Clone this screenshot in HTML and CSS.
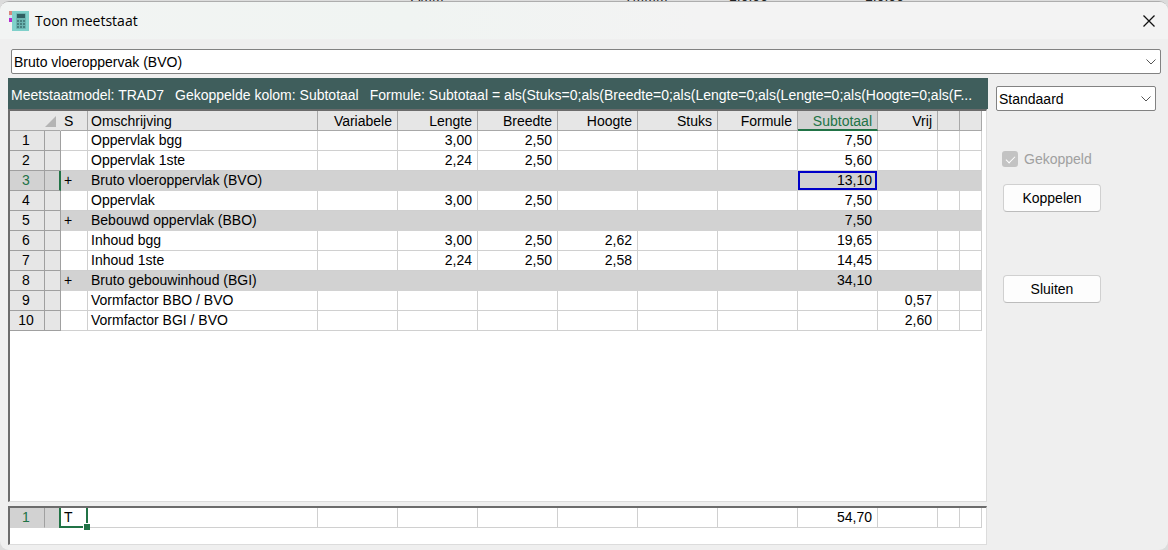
FILE: index.html
```html
<!DOCTYPE html>
<html lang="nl">
<head>
<meta charset="utf-8">
<title>Toon meetstaat</title>
<link rel="stylesheet" href="styles.css">
</head>
<body>
<div class="behind" aria-hidden="true">
  <span class="behind-text behind-a">AMM</span>
  <span class="behind-text behind-b">TMMM</span>
  <span class="behind-text behind-c">1,0,00</span>
  <span class="behind-text behind-d">1,0,00</span>
</div>
<main class="dialog">
  <header class="titlebar">
    <svg class="app-icon" viewBox="0 0 20 20" aria-hidden="true">
      <rect x="0" y="0" width="4" height="4" fill="#d9877c"/>
      <rect x="0" y="4" width="4" height="3" fill="#cfe6f2"/>
      <rect x="0" y="7" width="4" height="4" fill="#b52bd0"/>
      <rect x="3" y="0" width="17" height="20" fill="#7fd0ca"/>
      <rect x="7" y="2" width="10" height="16" rx="1" fill="#6bb5b1"/>
      <rect x="8" y="3" width="8" height="4" fill="#2f5f62"/>
      <g fill="#47807f"><rect x="8" y="9" width="2" height="2"/><rect x="11" y="9" width="2" height="2"/><rect x="14" y="9" width="2" height="2"/><rect x="8" y="12" width="2" height="2"/><rect x="11" y="12" width="2" height="2"/><rect x="14" y="12" width="2" height="2"/><rect x="8" y="15" width="2" height="2"/><rect x="11" y="15" width="2" height="2"/><rect x="14" y="15" width="2" height="2"/></g>
    </svg>
    <h1 class="title">Toon meetstaat</h1>
    <button class="close" type="button" aria-label="Sluiten">
      <svg viewBox="0 0 12 12" width="12" height="12"><path d="M.5.5l11 11M11.5.5l-11 11" stroke="#111" stroke-width="1.3" fill="none"/></svg>
    </button>
  </header>
  <div class="content">
    <div class="combo">
      <select class="select" aria-label="Meetstaat"><option>Bruto vloeroppervak (BVO)</option></select>
      <svg class="chevron" viewBox="0 0 10 6" aria-hidden="true"><path d="M.5.5L5 5L9.500.5" stroke="#555" fill="none"/></svg>
    </div>
    <div class="columns">
      <section class="sheet">
        <p class="model"><span class="part">Meetstaatmodel: TRAD7</span><span class="part">Gekoppelde kolom: Subtotaal</span><span>Formule: Subtotaal = als(Stuks=0;als(Breedte=0;als(Lengte=0;als(Lengte=0;als(Hoogte=0;als(F...</span></p>
        <div class="pane pane-main">
          <table class="grid">
            <colgroup><col class="c-row"><col class="c-mark"><col class="c-s"><col class="c-name"><col class="c-num" span="7"><col class="c-vrij"><col class="c-end" span="2"></colgroup>
            <thead>
              <tr><th colspan="2" class="corner"><svg class="corner-mark" viewBox="0 0 11 11" aria-hidden="true"><path d="M11 0V11H0Z" fill="#b4b4b4"/></svg></th><th class="txt">S</th><th class="txt">Omschrijving</th><th>Variabele</th><th>Lengte</th><th>Breedte</th><th>Hoogte</th><th>Stuks</th><th>Formule</th><th class="active">Subtotaal</th><th>Vrij</th><th></th><th></th></tr>
            </thead>
            <tbody>
              <tr><th>1</th><th></th><td></td><td class="txt">Oppervlak bgg</td><td></td><td>3,00</td><td>2,50</td><td></td><td></td><td></td><td>7,50</td><td></td><td></td><td></td></tr>
              <tr><th>2</th><th></th><td></td><td class="txt">Oppervlak 1ste</td><td></td><td>2,24</td><td>2,50</td><td></td><td></td><td></td><td>5,60</td><td></td><td></td><td></td></tr>
              <tr class="total current"><th>3</th><th></th><td class="txt">+</td><td class="txt">Bruto vloeroppervlak (BVO)</td><td></td><td></td><td></td><td></td><td></td><td></td><td class="linked">13,10</td><td></td><td></td><td></td></tr>
              <tr><th>4</th><th></th><td></td><td class="txt">Oppervlak</td><td></td><td>3,00</td><td>2,50</td><td></td><td></td><td></td><td>7,50</td><td></td><td></td><td></td></tr>
              <tr class="total"><th>5</th><th></th><td class="txt">+</td><td class="txt">Bebouwd oppervlak (BBO)</td><td></td><td></td><td></td><td></td><td></td><td></td><td>7,50</td><td></td><td></td><td></td></tr>
              <tr><th>6</th><th></th><td></td><td class="txt">Inhoud bgg</td><td></td><td>3,00</td><td>2,50</td><td>2,62</td><td></td><td></td><td>19,65</td><td></td><td></td><td></td></tr>
              <tr><th>7</th><th></th><td></td><td class="txt">Inhoud 1ste</td><td></td><td>2,24</td><td>2,50</td><td>2,58</td><td></td><td></td><td>14,45</td><td></td><td></td><td></td></tr>
              <tr class="total"><th>8</th><th></th><td class="txt">+</td><td class="txt">Bruto gebouwinhoud (BGI)</td><td></td><td></td><td></td><td></td><td></td><td></td><td>34,10</td><td></td><td></td><td></td></tr>
              <tr><th>9</th><th></th><td></td><td class="txt">Vormfactor BBO / BVO</td><td></td><td></td><td></td><td></td><td></td><td></td><td></td><td>0,57</td><td></td><td></td></tr>
              <tr><th>10</th><th></th><td></td><td class="txt">Vormfactor BGI / BVO</td><td></td><td></td><td></td><td></td><td></td><td></td><td></td><td>2,60</td><td></td><td></td></tr>
            </tbody>
          </table>
        </div>
        <div class="pane pane-total">
          <table class="grid">
            <colgroup><col class="c-row"><col class="c-mark"><col class="c-s"><col class="c-name"><col class="c-num" span="7"><col class="c-vrij"><col class="c-end" span="2"></colgroup>
            <tbody>
              <tr class="sum"><th>1</th><th></th><td class="txt cursor">T</td><td></td><td></td><td></td><td></td><td></td><td></td><td></td><td>54,70</td><td></td><td></td><td></td></tr>
            </tbody>
          </table>
        </div>
      </section>
      <aside class="side">
        <div class="combo">
          <select class="select" aria-label="Weergave"><option>Standaard</option></select>
          <svg class="chevron" viewBox="0 0 10 6" aria-hidden="true"><path d="M.5.5L5 5L9.500.5" stroke="#555" fill="none"/></svg>
        </div>
        <div class="actions">
          <label class="check"><input type="checkbox" checked disabled>Gekoppeld</label>
          <button class="btn" type="button">Koppelen</button>
          <button class="btn btn-close" type="button">Sluiten</button>
        </div>
      </aside>
    </div>
  </div>
</main>
</body>
</html>
```
FILE: styles.css
```css
* { box-sizing: border-box; }
body {
  margin: 0;
  height: 100vh;
  padding-top: 1px;
  overflow: hidden;
  background: #dcdcdc;
  font: 14px/20px "Liberation Sans", Arial, sans-serif;
  color: #000;
}
.behind-text { position: absolute; top: -12px; line-height: 16px; color: #222; }
.behind-a { left: 411px; }
.behind-b { left: 624px; }
.behind-c { left: 729px; }
.behind-d { left: 865px; }
.dialog {
  position: relative;
  display: flex;
  flex-direction: column;
  height: 100%;
  border-top: 1px solid #adadad;
  border-radius: 9px;
  background: #efefef;
  overflow: hidden;
}
.titlebar {
  display: flex;
  align-items: center;
  flex: none;
  height: 37px;
  padding: 0 13px 0 9px;
  background: linear-gradient(90deg, #f2f4f3, #f0f4f2 35%, #f3f3f3 60%);
}
.app-icon { width: 20px; height: 20px; }
.title { flex: 1; margin: 0 0 0 6px; font: 14px/20px "Open Sans", sans-serif; }
.close { display: flex; padding: 0; border: 0; background: none; }
.content { display: flex; flex-direction: column; flex: 1; min-height: 0; padding: 10px 7px 5px 8px; }
.combo { position: relative; flex: none; }
.content > .combo { margin-left: 3px; }
.select {
  display: block;
  width: 100%;
  height: 25px;
  padding: 0 24px 0 2px;
  border: 1px solid #828282;
  border-radius: 2px;
  background: #fff;
  color: #000;
  font: inherit;
  appearance: none;
}
.chevron { position: absolute; right: 5px; top: 10px; width: 10px; height: 6px; pointer-events: none; }
.columns { display: flex; gap: 8px; flex: 1; min-height: 0; padding-top: 4px; }
.sheet { display: flex; flex-direction: column; flex: 1; min-width: 0; }
.model {
  flex: none;
  margin: 0;
  padding: 7px 4px 4px 3px;
  background: #3f5e5c;
  color: #fff;
  white-space: nowrap;
  overflow: hidden;
  text-overflow: ellipsis;
}
.part { margin-right: 11px; }
.pane {
  margin-right: 1px;
  border: 2px solid #6c6c6c;
  border-right: 1px solid #dcdcdc;
  border-bottom: 1px solid #dcdcdc;
  background: #fff;
  overflow: hidden;
}
.pane-main { flex: 1; }
.pane-total { flex: none; height: 39px; margin-top: 4px; }
.grid { width: 972px; table-layout: fixed; border-collapse: separate; border-spacing: 0; }
.c-row { width: 35px; }
.c-mark { width: 16px; }
.c-s { width: 27px; }
.c-name { width: 230px; }
.c-num { width: 80px; }
.c-vrij { width: 60px; }
.c-end { width: 22px; }
.grid th, .grid td {
  height: 20px;
  padding: 0 5px 0 3px;
  border-right: 1px solid #d0d0d0;
  border-bottom: 1px solid #d0d0d0;
  font-weight: 400;
  line-height: 19px;
  text-align: right;
  white-space: nowrap;
}
.grid .txt { text-align: left; }
.grid thead th { padding-top: 2px; background: #e6e6e6; border-color: #a8a8a8; line-height: 17px; }
.grid thead .corner { padding: 0 4px 0 0; border-right-color: #e6e6e6; }
.corner-mark { display: inline-block; width: 11px; height: 11px; vertical-align: middle; }
.grid thead .active { background: #d2d2d2; border-bottom: 2px solid #217346; color: #217346; line-height: 16px; }
.grid tbody th { padding: 0 2px 0 0; background: #e6e6e6; border-color: #a0a0a0; text-align: center; }
.grid .total td { background: #d2d2d2; border-color: #d2d2d2; }
.grid .current th { background: #d2d2d2; color: #217346; }
.grid .current th + th { border-right: 2px solid #217346; }
.grid .total .linked { box-shadow: inset 0 0 0 2px #0000c8; }
.grid .sum th { background: #d2d2d2; color: #217346; border-bottom-color: #d2d2d2; }
.grid .cursor { position: relative; overflow: visible; }
.cursor::before {
  content: "";
  position: absolute;
  inset: -2px -1px -1px -2px;
  border: 2px solid #217346;
}
.cursor::after {
  content: "";
  position: absolute;
  right: -3px;
  bottom: -3px;
  width: 6px;
  height: 6px;
  border: 1px solid #fff;
  border-width: 1px 0 0 1px;
  background: #217346;
}
.side { flex: none; width: 160px; margin-right: 5px; padding-top: 8px; }
.actions { display: flex; flex-direction: column; align-items: flex-start; padding: 38px 0 0 6px; }
.check { display: flex; align-items: center; gap: 6px; color: #a0a0a0; }
.check input {
  width: 16px;
  height: 16px;
  margin: 0;
  border-radius: 3px;
  appearance: none;
  background: #c3c3c3;
  display: grid;
  place-items: center;
}
.check input::before {
  content: "";
  width: 8px;
  height: 4px;
  margin-bottom: 2px;
  border: solid #fff;
  border-width: 0 0 1px 1px;
  transform: rotate(-45deg);
}
.btn {
  width: 98px;
  height: 28px;
  margin: 15px 0 0 1px;
  padding: 0;
  border: 1px solid #d0d0d0;
  border-bottom-color: #bcbcbc;
  border-radius: 4px;
  background: #fdfdfd;
  color: #000;
  font: inherit;
}
.btn-close { margin-top: 63px; }
```
